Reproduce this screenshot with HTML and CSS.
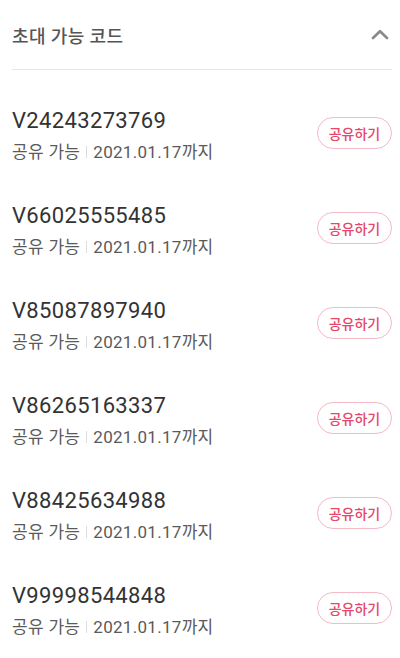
FILE: index.html
```html
<!DOCTYPE html>
<html lang="ko">
<head>
<meta charset="utf-8">
<link rel="stylesheet" href="styles.css">
</head>
<body>
<div class="panel">
  <div class="header">
    <span class="title">초대 가능 코드</span>
    <svg class="chevron" width="18" height="11" viewBox="0 0 18 11"><polyline points="2,9 9,2.2 16,9" fill="none" stroke="#8a8a8a" stroke-width="2.7" stroke-linecap="round" stroke-linejoin="round"/></svg>
  </div>
  <ul class="list">
    <li class="row"><div class="info"><div class="code">V24243273769</div><div class="sub">공유 가능<span class="sep"></span>2021.01.17까지</div></div><button class="share">공유하기</button></li>
    <li class="row"><div class="info"><div class="code">V66025555485</div><div class="sub">공유 가능<span class="sep"></span>2021.01.17까지</div></div><button class="share">공유하기</button></li>
    <li class="row"><div class="info"><div class="code">V85087897940</div><div class="sub">공유 가능<span class="sep"></span>2021.01.17까지</div></div><button class="share">공유하기</button></li>
    <li class="row"><div class="info"><div class="code">V86265163337</div><div class="sub">공유 가능<span class="sep"></span>2021.01.17까지</div></div><button class="share">공유하기</button></li>
    <li class="row"><div class="info"><div class="code">V88425634988</div><div class="sub">공유 가능<span class="sep"></span>2021.01.17까지</div></div><button class="share">공유하기</button></li>
    <li class="row"><div class="info"><div class="code">V99998544848</div><div class="sub">공유 가능<span class="sep"></span>2021.01.17까지</div></div><button class="share">공유하기</button></li>
  </ul>
</div>
</body>
</html>
```
FILE: styles.css
```css
html, body {
  margin: 0;
  padding: 0;
  background: #ffffff;
}
body {
  font-family: Roboto, "Noto Sans CJK KR", sans-serif;
}
.panel {
  padding: 0 8px 0 12px;
}
.header {
  height: 69px;
  display: flex;
  align-items: center;
  justify-content: space-between;
  border-bottom: 1px solid #e6e6e6;
}
.title {
  font-size: 18px;
  letter-spacing: 0.4px;
  color: #555555;
  font-weight: 500;
}
.chevron {
  margin-right: 3px;
  margin-top: -1px;
}
.list {
  list-style: none;
  margin: 0;
  padding: 18px 0 0;
}
.row {
  display: flex;
  justify-content: space-between;
  align-items: flex-start;
  padding: 18px 0 15px;
}
.code {
  font-size: 22px;
  letter-spacing: 0.35px;
  line-height: 30px;
  color: #333333;
}
.sub {
  font-size: 17px;
  letter-spacing: 0.3px;
  line-height: 32px;
  color: #5a5a5a;
  display: flex;
  align-items: center;
}
.sep {
  display: inline-block;
  width: 1px;
  height: 12px;
  background: #dddddd;
  margin: 0 6px 0 6px;
}
.share {
  margin-top: 11px;
  width: 75px;
  height: 32px;
  border: 1px solid #f3b9c5;
  border-radius: 16px;
  background: #ffffff;
  color: #e5486a;
  font-family: "Noto Sans CJK KR", sans-serif;
  font-size: 14px;
  font-weight: 500;
  padding: 0;
}
```
